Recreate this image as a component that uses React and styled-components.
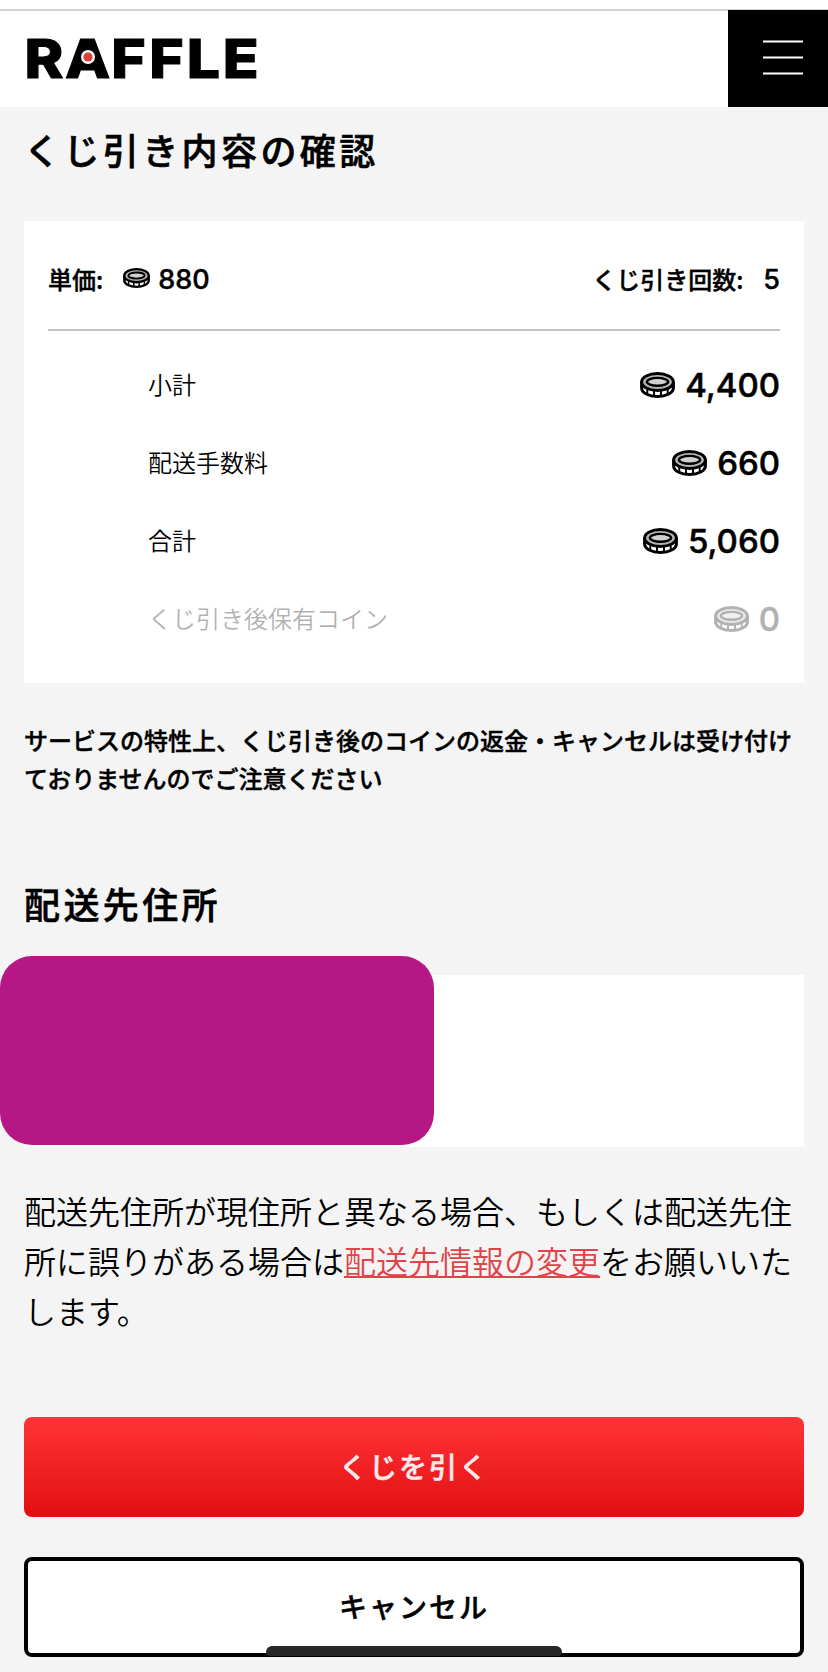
import styled, { createGlobalStyle } from 'styled-components';

const details = [
  { label: '小計', value: '4,400' },
  { label: '配送手数料', value: '660' },
  { label: '合計', value: '5,060' },
  { label: 'くじ引き後保有コイン', value: '0', muted: true },
];

const Logo = () => (
  <LogoSvg viewBox="0 0 232 42" role="img" aria-label="RAFFLE">
    <LogoText
      x="-2.4 34.8 77.4 112.2 146.5 179.6"
      y="40.6"
      transform="scale(1.09 1)"
    >
      RAFFLE
    </LogoText>
    <path d="M61 9L50 32H72Z" fill="#000" />
    <circle cx="61" cy="20" r="7" fill="#fff" />
    <circle cx="61" cy="20" r="4.6" fill="#e03b3e" />
  </LogoSvg>
);

const MenuIcon = () => (
  <svg width="40" height="35" viewBox="0 0 40 35" fill="none">
    <path d="M0 1.5H40M0 17.5H40M0 33.5H40" stroke="#fff" strokeWidth="2" />
  </svg>
);

const CoinIcon = ({ width }) => (
  <svg width={width} height={(width * 26) / 35} viewBox="0 0 35 26" fill="none">
    <path
      d="M1.6 10V16C1.6 20.8 8.6 24.4 17.5 24.4S33.4 20.8 33.4 16V10"
      fill="#fff"
      stroke="#000"
      strokeWidth="3"
    />
    <path
      d="M7.3 16V22.4M14 18V24.4M21 18V24.4M27.7 16V22.4"
      stroke="#000"
      strokeWidth="1.9"
    />
    <ellipse
      cx="17.5"
      cy="10"
      rx="15.9"
      ry="8.5"
      fill="#b4b4b4"
      stroke="#000"
      strokeWidth="3"
    />
    <ellipse
      cx="17.5"
      cy="9.8"
      rx="10.6"
      ry="3.9"
      fill="#d0d0d0"
      stroke="#000"
      strokeWidth="2.4"
    />
  </svg>
);

const App = () => {
  return (
    <>
      <GlobalStyle />
      <Header>
        <Logo />
        <MenuButton aria-label="メニュー">
          <MenuIcon />
        </MenuButton>
      </Header>
      <Main>
        <Title>くじ引き内容の確認</Title>
        <SummaryCard>
          <SummaryHead>
            <HeadItem>
              単価:
              <HeadPrice>
                <CoinIcon width={27} />
                <HeadNumber>880</HeadNumber>
              </HeadPrice>
            </HeadItem>
            <HeadItem>
              くじ引き回数:
              <HeadNumber>5</HeadNumber>
            </HeadItem>
          </SummaryHead>
          <DetailList>
            {details.map((detail) => (
              <DetailRow key={detail.label} $muted={detail.muted}>
                <DetailLabel>{detail.label}</DetailLabel>
                <DetailValue>
                  <CoinIcon width={35} />
                  {detail.value}
                </DetailValue>
              </DetailRow>
            ))}
          </DetailList>
        </SummaryCard>
        <Notice>
          サービスの特性上、くじ引き後のコインの返金・キャンセルは受け付けておりませんのでご注意ください
        </Notice>
        <SubTitle>配送先住所</SubTitle>
        <AddressCard>
          <AddressMask />
        </AddressCard>
        <AddressNote>
          配送先住所が現住所と異なる場合、もしくは配送先住所に誤りがある場合は
          <ChangeLink href="#">配送先情報の変更</ChangeLink>
          をお願いいたします。
        </AddressNote>
        <DrawButton>くじを引く</DrawButton>
        <CancelButton>キャンセル</CancelButton>
      </Main>
      <HomeBar />
    </>
  );
};

export default App;

const GlobalStyle = createGlobalStyle`
  * {
    box-sizing: border-box;
  }

  body {
    margin: 0;
    background: #f4f4f4;
    color: #000;
    font-family: 'Noto Sans CJK JP', sans-serif;
  }
`;

const Header = styled.header`
  display: flex;
  align-items: center;
  justify-content: space-between;
  height: 106.5px;
  padding: 10px 0 0 27px;
  background: linear-gradient(#fff 9px, #d3d3d3 9px, #d3d3d3 11px, #fff 11px);
`;

const LogoSvg = styled.svg`
  width: 232px;
  height: 42px;
  overflow: visible;
`;

const LogoText = styled.text`
  font-family: Inter, sans-serif;
  font-size: 54px;
  font-weight: 800;
  fill: #000;
  stroke: #000;
  stroke-width: 1;
`;

const MenuButton = styled.button`
  display: flex;
  align-items: flex-start;
  width: 100px;
  height: 96.5px;
  padding: 30px 0 0 35px;
  border: none;
  background: #000;
`;

const Main = styled.main`
  padding: 0 24px 15px;
`;

const Title = styled.h1`
  margin: 0;
  padding-top: 15px;
  height: 114px;
  font-size: 36px;
  font-weight: 500;
  line-height: 54px;
  letter-spacing: 3.4px;
  -webkit-text-stroke: 0.6px;
`;

const SubTitle = styled(Title).attrs({ as: 'h2' })`
  padding-top: 0;
  height: 98.5px;
`;

const SummaryCard = styled.section`
  height: 462px;
  padding: 0 24px;
  background: #fff;
`;

const SummaryHead = styled.div`
  display: flex;
  align-items: center;
  justify-content: space-between;
  height: 110px;
  padding-top: 8px;
  border-bottom: 2px solid #c2c2c2;
`;

const HeadItem = styled.div`
  display: flex;
  align-items: center;
  gap: 20px;
  font-size: 24px;
  font-weight: 500;
  line-height: 34px;
  -webkit-text-stroke: 0.4px;
`;

const HeadPrice = styled.div`
  display: flex;
  align-items: center;
  gap: 8px;
`;

const HeadNumber = styled.span`
  padding-top: 2px;
  font-family: Inter, sans-serif;
  font-size: 27px;
`;

const DetailList = styled.div`
  padding: 15px 0 0 100px;
`;

const DetailRow = styled.div`
  display: flex;
  align-items: center;
  justify-content: space-between;
  height: 78px;
  opacity: ${(props) => (props.$muted ? 0.3 : 1)};
`;

const DetailLabel = styled.span`
  padding-bottom: 2px;
  font-size: 24px;
  font-weight: 350;
`;

const DetailValue = styled.div`
  display: flex;
  align-items: center;
  gap: 10px;
  font-family: Inter, sans-serif;
  font-size: 33px;
  font-weight: 500;
  -webkit-text-stroke: 0.5px;
`;

const Notice = styled.p`
  margin: 0;
  padding: 38px 0 79.5px;
  font-size: 24px;
  font-weight: 500;
  line-height: 38px;
  -webkit-text-stroke: 0.4px;
`;

const AddressCard = styled.section`
  position: relative;
  height: 172px;
  background: #fff;
`;

const AddressMask = styled.div`
  position: absolute;
  top: -19px;
  left: -24px;
  width: 434px;
  height: 189px;
  border-radius: 32px;
  background: #b51885;
`;

const AddressNote = styled.p`
  margin: 0;
  padding: 38.5px 0 81.5px;
  font-size: 32px;
  font-weight: 350;
  line-height: 50px;
`;

const ChangeLink = styled.a`
  color: #df4548;
  text-decoration: underline;
  text-decoration-thickness: 2px;
  text-underline-offset: 2px;
  text-decoration-skip-ink: none;
`;

const Button = styled.button`
  display: block;
  width: 100%;
  height: 100px;
  padding: 0 0 2px;
  border-radius: 8px;
  font-family: inherit;
  font-size: 28px;
  font-weight: 500;
  letter-spacing: 2px;
  -webkit-text-stroke: 0.5px;
`;

const DrawButton = styled(Button)`
  border: none;
  background: linear-gradient(#ff3336, #e20f11);
  color: #ffebee;
`;

const CancelButton = styled(Button)`
  margin-top: 40px;
  border: 4px solid #000;
  background: #fff;
  color: #000;
`;

const HomeBar = styled.div`
  position: fixed;
  bottom: 16px;
  left: 266px;
  width: 296px;
  height: 10.5px;
  border-radius: 6px 6px 4px 4px;
  background: #272727;
`;
